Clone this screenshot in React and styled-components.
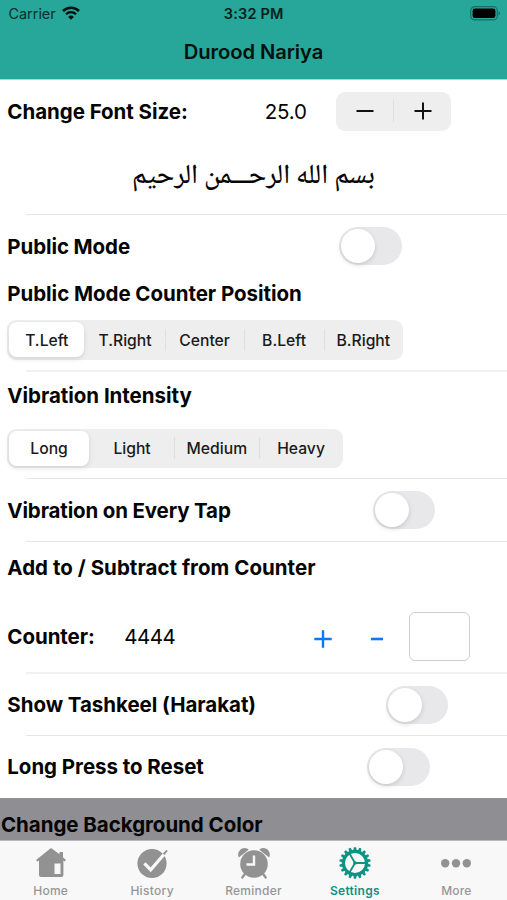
import React from "react";
import styled, { createGlobalStyle } from "styled-components";

const positions = ["T.Left", "T.Right", "Center", "B.Left", "B.Right"];
const intensities = ["Long", "Light", "Medium", "Heavy"];

const WifiIcon = () => (
  <svg width="18" height="14" viewBox="0 0 18 14" fill="none">
    <path d="M1 5a11.4 11.4 0 0 1 16 0" stroke="#04110f" strokeWidth="2.5" />
    <path d="M4 8.3a7 7 0 0 1 10 0" stroke="#04110f" strokeWidth="2.3" />
    <path d="M9 13.7 6.1 10.9a4.2 4.2 0 0 1 5.8 0z" fill="#04110f" />
  </svg>
);

const BatteryIcon = () => (
  <svg width="31" height="15" viewBox="0 0 31 15">
    <rect
      x="0.7"
      y="0.7"
      width="26.6"
      height="13.2"
      rx="4"
      fill="none"
      stroke="#177068"
      strokeWidth="1.2"
    />
    <rect x="2.6" y="2.6" width="22.8" height="9.4" rx="2.2" fill="#000" />
    <path d="M28.6 5.2c2 .8 2 3.4 0 4.2z" fill="#177068" />
  </svg>
);

const HomeIcon = () => (
  <svg width="32" height="32" viewBox="0 0 32 32" fill="#929292">
    <path
      d="M16 1 1 13l1.4 1.6 1.6-1V28q0 2 2 2h20.4q2 0 2-2V13.6l1.2 1L31 13l-3-2.7V5h-3.5v2.3zM19.5 16.5h6V27h-6z"
      fillRule="evenodd"
    />
  </svg>
);

const HistoryIcon = () => (
  <svg width="32" height="32" viewBox="0 0 32 32">
    <circle cx="16" cy="16.5" r="14.6" fill="#929292" />
    <path d="m8.4 16.3 6.3 6.5L27.9 7.5" fill="none" stroke="#f8f8f8" strokeWidth="3.2" />
    <path d="m26.9 6.4 3.500-3.700 1.300 1.300-3.200 4z" fill="#929292" />
  </svg>
);

const ReminderIcon = () => (
  <svg width="34" height="32" viewBox="0 0 34 32">
    <path
      d="M1.8 10.5C-.4 5.5 3.5.8 8 1q2.4.1 3.7 1.7zM32.2 10.5C34.4 5.5 30.5.8 26 1q-2.4.1-3.7 1.7z"
      fill="#929292"
    />
    <path
      d="m8.5 26-3.2 4.5M25.5 26l3.2 4.5"
      stroke="#929292"
      strokeWidth="2.2"
      strokeLinecap="round"
    />
    <circle cx="17" cy="17" r="13.8" fill="#929292" />
    <path d="M17 8.5v9H9.5" fill="none" stroke="#f8f8f8" strokeWidth="2.4" />
  </svg>
);

const teeth = Array.from({ length: 18 }, (_, i) => i * 20);

const SettingsIcon = () => (
  <svg width="32" height="32" viewBox="-16 -16 32 32">
    <circle r="11.6" fill="none" stroke="#0b9384" strokeWidth="3.1" />
    {teeth.map((a) => (
      <path
        key={a}
        d="M-1.7-12.5-1.1-15.7h2.2l.6 3.2z"
        fill="#0b9384"
        transform={`rotate(${a})`}
      />
    ))}
    <path d="M0 0h11M0 0-5.5-9.5M0 0l-5.5 9.5" stroke="#0b9384" strokeWidth="1.8" />
    <circle r="1.8" fill="#0b9384" />
  </svg>
);

const MoreIcon = () => (
  <svg width="32" height="32" viewBox="0 0 32 32" fill="#929292">
    <circle cx="5.2" cy="16.2" r="4.2" />
    <circle cx="16" cy="16.2" r="4.2" />
    <circle cx="26.8" cy="16.2" r="4.2" />
  </svg>
);

const tabs = [
  { label: "Home", Icon: HomeIcon, spacing: 0.2 },
  { label: "History", Icon: HistoryIcon, spacing: 0.3 },
  { label: "Reminder", Icon: ReminderIcon, spacing: 0.25 },
  { label: "Settings", Icon: SettingsIcon, spacing: 0.3, active: true },
  { label: "More", Icon: MoreIcon, spacing: 0.1 },
];

const Segmented = ({ options, widths }) => (
  <SegmentTrack>
    {options.map((option, i) => (
      <Segment key={option} $width={widths[i]} $selected={i === 0} $divided={i > 1}>
        {option}
      </Segment>
    ))}
  </SegmentTrack>
);

const App = () => {
  return (
    <Screen>
      <GlobalStyle />
      <Header>
        <StatusBar>
          <Carrier>
            Carrier
            <WifiIcon />
          </Carrier>
          <Clock>3:32 PM</Clock>
          <Battery>
            <BatteryIcon />
          </Battery>
        </StatusBar>
        <Title>Durood Nariya</Title>
      </Header>

      <Settings>
        <Section $height={135}>
          <Row $height={62}>
            <Label $width={257.5}>Change Font Size:</Label>
            <Value $width={71.5} $spacing={-0.2}>
              25.0
            </Value>
            <Stepper>
              <StepButton aria-label="Decrease">
                <svg width="18" height="18" viewBox="0 0 18 18">
                  <path d="M.5 9h17" stroke="#111" strokeWidth="2" />
                </svg>
              </StepButton>
              <StepDivider />
              <StepButton aria-label="Increase">
                <svg width="18" height="18" viewBox="0 0 18 18">
                  <path d="M.5 9h17M9 .5v17" stroke="#111" strokeWidth="2" />
                </svg>
              </StepButton>
            </Stepper>
          </Row>
          <Preview dir="rtl" lang="ar">
            بسم الله الرحـــمن الرحيم
          </Preview>
        </Section>

        <Section $height={156} $soft>
          <Row $height={62}>
            <Label $width={332} $spacing={-0.1}>
              Public Mode
            </Label>
            <Toggle />
          </Row>
          <Row $height={33}>
            <Label $spacing={-0.05}>Public Mode Counter Position</Label>
          </Row>
          <Row $height={60}>
            <Segmented options={positions} widths={[78, 79.5, 79.5, 79.5, 79]} />
          </Row>
        </Section>

        <Section $height={107}>
          <Row $height={48}>
            <Label $spacing={-0.04}>Vibration Intensity</Label>
          </Row>
          <Row $height={58}>
            <Segmented options={intensities} widths={[82.5, 84.5, 85, 83.5]} />
          </Row>
        </Section>

        <Section $height={63}>
          <Row $height={63}>
            <Label $width={365.5} $spacing={-0.15}>
              Vibration on Every Tap
            </Label>
            <Toggle />
          </Row>
        </Section>

        <Section $height={131.5} $soft>
          <Row $height={51}>
            <Label $spacing={0.03}>Add to / Subtract from Counter</Label>
          </Row>
          <Row $height={88}>
            <Label $width={117} $spacing={-0.05}>
              Counter:
            </Label>
            <Value $width={189.5} $spacing={-0.5}>
              4444
            </Value>
            <CountButton $width={57.5} aria-label="Add">
              <svg width="18" height="18" viewBox="0 0 18 18">
                <path d="M.3 9h17.4M9 .3v17.4" stroke="#0a78f7" strokeWidth="2.4" />
              </svg>
            </CountButton>
            <CountButton $width={37.5} aria-label="Subtract">
              <svg width="12" height="18" viewBox="0 0 12 18">
                <path d="M0 9h12" stroke="#0a78f7" strokeWidth="2.6" />
              </svg>
            </CountButton>
            <AmountInput aria-label="Amount" />
          </Row>
        </Section>

        <Section $height={62}>
          <Row $height={62}>
            <Label $width={378.5}>Show Tashkeel (Harakat)</Label>
            <Toggle />
          </Row>
        </Section>

        <Row $height={62.5}>
          <Label $width={360}>Long Press to Reset</Label>
          <Toggle />
        </Row>

        <GroupHeader>
          <Label>Change Background Color</Label>
        </GroupHeader>
      </Settings>

      <TabBar>
        {tabs.map(({ label, Icon, spacing, active }) => (
          <Tab key={label} $active={active}>
            <Icon />
            <TabLabel $spacing={spacing} $active={active}>
              {label}
            </TabLabel>
          </Tab>
        ))}
      </TabBar>
    </Screen>
  );
};

const GlobalStyle = createGlobalStyle`
  * {
    box-sizing: border-box;
  }

  body {
    margin: 0;
    font-family: Inter, "Liberation Sans", sans-serif;
    color: #050505;
    background: #fff;
  }

  button {
    padding: 0;
    border: 0;
    background: none;
  }
`;

const Screen = styled.div`
  display: flex;
  flex-direction: column;
  width: 507px;
  height: 900px;
  overflow: hidden;
`;

const Header = styled.header`
  flex: none;
  height: 80px;
  background: #27a69a;
  border-bottom: 1px solid #a9dbd6;
`;

const StatusBar = styled.div`
  display: grid;
  grid-template-columns: 1fr auto 1fr;
  align-items: center;
  height: 27px;
  padding: 0 6px 0 8.5px;
`;

const Carrier = styled.div`
  display: flex;
  align-items: center;
  gap: 6px;
  font-size: 14.4px;
  color: #0b2f2b;

  svg {
    margin-bottom: 2px;
  }
`;

const Clock = styled.div`
  font-size: 14.5px;
  font-weight: 600;
  letter-spacing: 0.2px;
  color: #06201d;
  margin-right: 2px;
`;

const Battery = styled.div`
  display: flex;
  justify-content: flex-end;
  margin-bottom: 1px;
`;

const Title = styled.h1`
  margin: 0;
  font-size: 20.2px;
  font-weight: 600;
  line-height: 50px;
  letter-spacing: -0.08px;
  text-align: center;
  color: #04110f;
`;

const Settings = styled.main`
  flex: 1;
  min-height: 0;
  overflow: hidden;
`;

const Section = styled.section`
  height: ${(p) => p.$height + (p.$soft ? 0.5 : 0)}px;
  background: linear-gradient(
      ${(p) => (p.$soft ? "#f1f1f2, #f1f1f2" : "#e6e6e7, #e6e6e7")}
    )
    26px 100% / 100% ${(p) => (p.$soft ? 2 : 1)}px no-repeat;
`;

const Row = styled.div`
  display: flex;
  align-items: center;
  height: ${(p) => p.$height}px;
  padding-left: 7.3px;
`;

const Label = styled.div`
  flex: none;
  width: ${(p) => (p.$width ? `${p.$width}px` : "auto")};
  font-size: 20.5px;
  font-weight: 650;
  letter-spacing: ${(p) => p.$spacing ?? -0.04}px;
  white-space: nowrap;
`;

const Value = styled.div`
  flex: none;
  width: ${(p) => p.$width}px;
  font-size: 20.5px;
  letter-spacing: ${(p) => p.$spacing ?? 0}px;
`;

const Stepper = styled.div`
  display: flex;
  align-items: center;
  width: 115px;
  height: 39px;
  border-radius: 9px;
  background: #eeeeef;
`;

const StepButton = styled.button`
  display: flex;
  flex: 1;
  align-items: center;
  justify-content: center;
  height: 100%;
`;

const StepDivider = styled.span`
  width: 1px;
  height: 22px;
  background: #dfdfe1;
`;

const Preview = styled.div`
  height: 70px;
  font-family: "Noto Naskh Arabic", "DejaVu Sans", serif;
  font-size: 27.4px;
  font-weight: 500;
  line-height: 71px;
  text-align: center;
`;

const Toggle = styled.span`
  display: flex;
  align-items: center;
  width: 62.5px;
  height: 38px;
  padding-left: 2px;
  border-radius: 19px;
  background: #e8e8ea;

  &::before {
    content: "";
    width: 34px;
    height: 34px;
    border-radius: 50%;
    background: #fff;
    box-shadow: 0 2px 5px rgba(0, 0, 0, 0.14);
  }
`;

const SegmentTrack = styled.div`
  display: flex;
  height: 39.5px;
  border-radius: 9px;
  background: #eeeeef;
`;

const Segment = styled.div`
  display: flex;
  align-items: center;
  justify-content: center;
  width: ${(p) => p.$width}px;
  height: 35px;
  margin: 2px 0;
  padding-top: 1px;
  font-size: 15.7px;
  font-weight: 500;
  color: #1a1a1a;
  background: ${(p) =>
    p.$divided
      ? "linear-gradient(#dfdfe1, #dfdfe1) 0 50% / 1px 22px no-repeat"
      : "none"};

  ${(p) =>
    p.$selected &&
    `
    width: ${p.$width - 3}px;
    margin: 2px 1px 2px 2px;
    border-radius: 8px;
    background: #fff;
    box-shadow: 0 2px 5px rgba(0, 0, 0, 0.12);
  `}
`;

const CountButton = styled.button`
  display: flex;
  flex: none;
  align-items: center;
  width: ${(p) => p.$width}px;
  padding-top: 4px;
`;

const AmountInput = styled.input`
  width: 61px;
  height: 49px;
  padding: 0 8px;
  border: 1px solid #cfcfcf;
  border-radius: 6px;
  background: #fff;
`;

const GroupHeader = styled.div`
  display: flex;
  align-items: center;
  height: 52px;
  padding-left: 1px;
  background: #8e8e93;
`;

const TabBar = styled.nav`
  display: flex;
  flex: none;
  height: 60px;
  border-top: 1px solid #b9b9bb;
  background: #f8f8f8;
`;

const Tab = styled.div`
  display: flex;
  flex: 1;
  flex-direction: column;
  align-items: center;
  padding-top: 6px;
  color: ${(p) => (p.$active ? "#0b9384" : "#969696")};
`;

const TabLabel = styled.span`
  margin-top: 4px;
  font-size: 12px;
  font-weight: ${(p) => (p.$active ? 600 : 500)};
  line-height: 16px;
  letter-spacing: ${(p) => p.$spacing}px;
`;

export default App;
